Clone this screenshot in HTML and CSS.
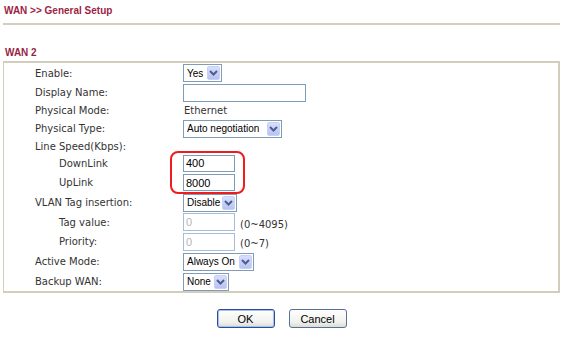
FILE: index.html
```html
<!DOCTYPE html>
<html lang="en">
<head>
  <meta charset="UTF-8">
  <title>WAN &gt;&gt; General Setup</title>
  <link rel="stylesheet" href="styles.css">
</head>
<body>
  <div class="page">
    <div class="title">WAN &gt;&gt; General Setup</div>
    <div class="rule"></div>

    <div class="section">WAN 2</div>
    <div class="panel">
      <div class="row r-enable">
        <div class="label">Enable:</div>
        <div class="value">
          <div class="select w-yes"><span class="sel-text">Yes</span><span class="sel-btn"><svg width="9" height="6" viewBox="0 0 9 6"><path d="M1 1 L4.5 4.5 L8 1" fill="none" stroke="#4a5f8f" stroke-width="2"/></svg></span></div>
        </div>
      </div>
      <div class="row r-name">
        <div class="label">Display Name:</div>
        <div class="value"><input class="text w-name" type="text" value=""></div>
      </div>
      <div class="row r-mode">
        <div class="label">Physical Mode:</div>
        <div class="value plain">Ethernet</div>
      </div>
      <div class="row r-type">
        <div class="label">Physical Type:</div>
        <div class="value">
          <div class="select w-type"><span class="sel-text">Auto negotiation</span><span class="sel-btn"><svg width="9" height="6" viewBox="0 0 9 6"><path d="M1 1 L4.5 4.5 L8 1" fill="none" stroke="#4a5f8f" stroke-width="2"/></svg></span></div>
        </div>
      </div>
      <div class="row r-speed">
        <div class="label">Line Speed(Kbps):</div>
        <div class="value"></div>
      </div>
      <div class="row r-down">
        <div class="label sub">DownLink</div>
        <div class="value"><input class="text w-small short" type="text" value="400"></div>
      </div>
      <div class="row r-up">
        <div class="label sub">UpLink</div>
        <div class="value"><input class="text w-small short" type="text" value="8000"></div>
      </div>
      <div class="row r-vlan">
        <div class="label">VLAN Tag insertion:</div>
        <div class="value">
          <div class="select w-vlan"><span class="sel-text">Disable</span><span class="sel-btn"><svg width="9" height="6" viewBox="0 0 9 6"><path d="M1 1 L4.5 4.5 L8 1" fill="none" stroke="#4a5f8f" stroke-width="2"/></svg></span></div>
        </div>
      </div>
      <div class="row r-tag">
        <div class="label sub">Tag value:</div>
        <div class="value"><input class="text w-small" type="text" value="0" disabled><span class="hint">(0~4095)</span></div>
      </div>
      <div class="row r-prio">
        <div class="label sub">Priority:</div>
        <div class="value"><input class="text w-small" type="text" value="0" disabled><span class="hint">(0~7)</span></div>
      </div>
      <div class="row r-active">
        <div class="label">Active Mode:</div>
        <div class="value">
          <div class="select w-active"><span class="sel-text">Always On</span><span class="sel-btn"><svg width="9" height="6" viewBox="0 0 9 6"><path d="M1 1 L4.5 4.5 L8 1" fill="none" stroke="#4a5f8f" stroke-width="2"/></svg></span></div>
        </div>
      </div>
      <div class="row r-backup">
        <div class="label">Backup WAN:</div>
        <div class="value">
          <div class="select w-backup"><span class="sel-text">None</span><span class="sel-btn"><svg width="9" height="6" viewBox="0 0 9 6"><path d="M1 1 L4.5 4.5 L8 1" fill="none" stroke="#4a5f8f" stroke-width="2"/></svg></span></div>
        </div>
      </div>

      <!-- highlight around the line speed fields -->
      <div class="mark"></div>
    </div>

    <div class="buttons">
      <button class="btn btn-ok">OK</button>
      <button class="btn">Cancel</button>
    </div>
  </div>
</body>
</html>
```

FILE: styles.css
```css
body {
  margin: 0;
  background-color: #fff;
  font-family: "DejaVu Sans", Verdana, sans-serif;
  font-size: 10px;
  color: #333;
}
.page {
  padding: 0 5px 0 3px;
}
.title, .section {
  font-family: "Liberation Sans", Arial, sans-serif;
  font-weight: bold;
  font-size: 10px;
  color: #9c1f45;
  line-height: 12px;
}
.title {
  padding: 5px 0 0 1px;
}
.rule {
  margin-top: 6px;
  height: 0;
  border-top: 2px solid #d2cebb;
}
.section {
  margin-top: 22px;
  padding-left: 2px;
  height: 14px;
}
.panel {
  position: relative;
  border: 2px solid #d2cebb;
  border-left-width: 1px;
  padding: 0 0 0 31px;
}
.row {
  display: flex;
  align-items: center;
}
.label {
  width: 148px;
  flex-shrink: 0;
}
.label.sub {
  padding-left: 24px;
  width: 124px;
}
.value {
  display: flex;
  align-items: center;
}
.value.plain {
  padding-left: 1px;
}
.r-enable { height: 20px; }
.r-name { height: 19px; }
.r-mode { height: 17px; }
.r-type { height: 19px; }
.r-speed { height: 16px; }
.r-down { height: 18px; }
.r-up { height: 21px; }
.r-vlan { height: 19px; }
.r-tag { height: 20px; }
.r-prio { height: 19px; }
.r-active { height: 21px; }
.r-backup { height: 19px; }

.select {
  display: flex;
  align-items: center;
  box-sizing: border-box;
  height: 18px;
  border: 1px solid #7f9db9;
  background-color: #fff;
  font-family: "Liberation Sans", Arial, sans-serif;
  font-size: 10px;
  color: #000;
  white-space: nowrap;
}
.sel-text {
  flex: 1 1 0;
  min-width: 0;
  padding-left: 3px;
}
.sel-btn {
  display: flex;
  align-items: center;
  justify-content: center;
  flex-shrink: 0;
  box-sizing: border-box;
  width: 13px;
  height: 14px;
  margin-right: 1px;
  border: 1px solid #c8d0f6;
  border-radius: 2px;
  background: linear-gradient(#d8defc, #b9c2f2);
}
.w-yes { width: 39px; }
.w-type { width: 99px; }
.w-vlan { width: 54px; }
.w-active { width: 71px; }
.w-backup { width: 46px; }

.text {
  box-sizing: border-box;
  height: 18px;
  margin: 0;
  padding: 1px 2px;
  border: 1px solid #7f9db9;
  font-family: "Liberation Sans", Arial, sans-serif;
  font-size: 11px;
  color: #000;
  background-color: #fff;
}
.text:disabled {
  color: #b5b5b5;
  border-color: #a9bdd6;
}
.text.short {
  height: 17px;
}
.w-name { width: 123px; }
.w-small { width: 52px; }
.hint {
  margin-left: 5px;
  padding-top: 4px;
}
.mark {
  position: absolute;
  left: 166px;
  top: 88px;
  width: 75px;
  height: 43px;
  box-sizing: border-box;
  border: 2px solid #ee1c1c;
  border-radius: 8px;
}
.buttons {
  display: flex;
  justify-content: center;
  gap: 14px;
  margin-top: 16px;
}
.btn {
  width: 58px;
  height: 19px;
  padding: 0;
  border: 1px solid #5a6f98;
  border-radius: 3px;
  background: linear-gradient(#ffffff, #f1f1ee 70%, #dcdcd6);
  font-family: "Liberation Sans", Arial, sans-serif;
  font-size: 11px;
  color: #000;
}
.btn-ok {
  border-color: #2a4c9c;
  box-shadow: inset 0 0 0 1px #a8c0ee;
}
```
